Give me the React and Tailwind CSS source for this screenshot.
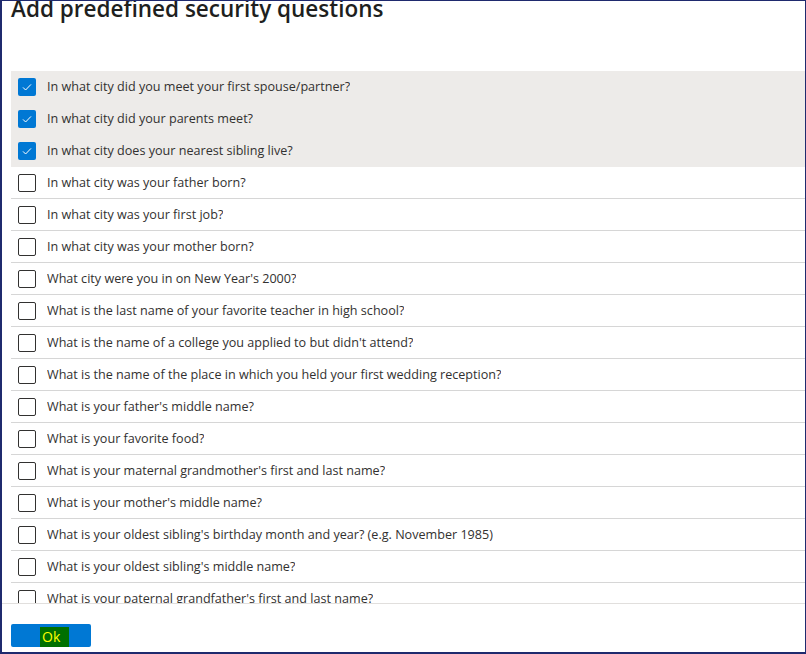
import React from "react";

const questions = [
  { text: "In what city did you meet your first spouse/partner?", checked: true },
  { text: "In what city did your parents meet?", checked: true },
  { text: "In what city does your nearest sibling live?", checked: true },
  { text: "In what city was your father born?" },
  { text: "In what city was your first job?" },
  { text: "In what city was your mother born?" },
  { text: "What city were you in on New Year's 2000?" },
  { text: "What is the last name of your favorite teacher in high school?" },
  { text: "What is the name of a college you applied to but didn't attend?" },
  { text: "What is the name of the place in which you held your first wedding reception?" },
  { text: "What is your father's middle name?" },
  { text: "What is your favorite food?" },
  { text: "What is your maternal grandmother's first and last name?" },
  { text: "What is your mother's middle name?" },
  { text: "What is your oldest sibling's birthday month and year? (e.g. November 1985)" },
  { text: "What is your oldest sibling's middle name?" },
  { text: "What is your paternal grandfather's first and last name?" },
  { text: "What is your paternal grandmother's maiden name?" },
  { text: "What is your youngest sibling's middle name?" },
];

function Checkbox({ checked }) {
  if (checked) {
    return (
      <span className="flex h-[18px] w-[18px] shrink-0 items-center justify-center rounded-[2px] bg-[#0078d4]">
        <svg width="12" height="12" viewBox="0 0 12 12" fill="none">
          <path d="M2 6.4l2.6 2.6L10 3.4" stroke="#fff" strokeWidth="1" />
        </svg>
      </span>
    );
  }
  return (
    <span className="h-[18px] w-[18px] shrink-0 rounded-[2px] border border-[#323130] bg-white" />
  );
}

export default function App() {
  return (
    <div
      className="flex h-[654px] w-[806px] flex-col overflow-hidden border-t border-r border-b-2 border-l-2 border-[#1f2a6e] bg-white text-[#323130]"
      style={{ fontFamily: '"Open Sans", "Noto Sans", sans-serif' }}
    >
      <div className="h-[70px] shrink-0 overflow-hidden pl-[9px]">
        <h1 className="-mt-[8px] text-[22.5px] font-semibold leading-[32px] text-[#201f1e]">
          Add predefined security questions
        </h1>
      </div>

      <div className="min-h-0 flex-1 overflow-hidden pl-[9px]">
        {questions.map((q) => (
          <div
            key={q.text}
            className={
              q.checked
                ? "flex h-[32px] items-center gap-[11px] bg-[#edebe9] px-[7px]"
                : "flex h-[32px] items-center gap-[11px] border-b border-[#d6d6d6] px-[7px] pt-px"
            }
          >
            <Checkbox checked={q.checked} />
            <span className="truncate text-[12.6px] leading-[18px]">{q.text}</span>
          </div>
        ))}
      </div>

      <div className="flex h-[49px] shrink-0 items-start border-t border-[#e1dfdd] pl-[9px] pt-[20px]">
        <button className="flex h-[23px] w-[80px] items-end justify-start rounded-[2px] bg-[#0078d4] pl-[29px]">
          <span className="flex h-[20px] w-[29px] items-center bg-[#007000] pl-[2px] text-[14px] leading-[20px] text-[#ffff00]">
            Ok
          </span>
        </button>
      </div>
    </div>
  );
}
